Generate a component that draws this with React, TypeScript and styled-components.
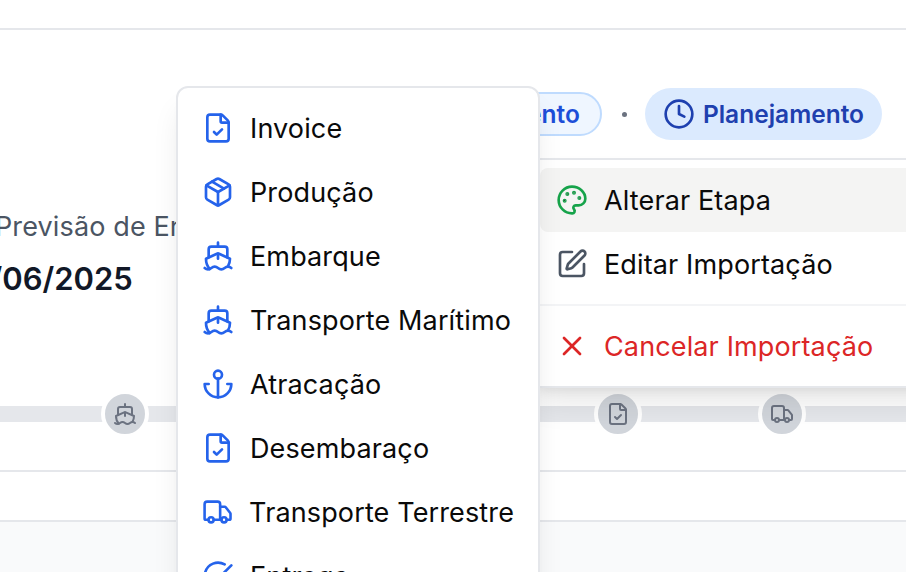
import styled, { createGlobalStyle } from 'styled-components';
import {
	CircleCheckBig,
	Clock,
	FileCheck,
	Package,
	Palette,
	Ship,
	SquarePen,
	Truck,
	X,
} from 'lucide-react';

// older lucide anchor: arc with short ends and no crossbar
const Anchor = ({ size = 24, color = 'currentColor' }: { size?: number; color?: string }) => (
	<svg
		width={size}
		height={size}
		viewBox="0 0 24 24"
		fill="none"
		stroke={color}
		strokeWidth="2"
		strokeLinecap="round"
		strokeLinejoin="round"
	>
		<circle cx="12" cy="5" r="3" />
		<line x1="12" y1="22" x2="12" y2="8" />
		<path d="M5 12H2a10 10 0 0 0 20 0h-3" />
	</svg>
);

const stages = [
	{ label: 'Invoice', Icon: FileCheck },
	{ label: 'Produção', Icon: Package },
	{ label: 'Embarque', Icon: Ship },
	{ label: 'Transporte Marítimo', Icon: Ship },
	{ label: 'Atracação', Icon: Anchor },
	{ label: 'Desembaraço', Icon: FileCheck },
	{ label: 'Transporte Terrestre', Icon: Truck },
	{ label: 'Entrega', Icon: CircleCheckBig },
];

const railSteps = [Ship, Ship, Anchor, FileCheck, Truck];

const App = () => {
	return (
		<Page>
			<GlobalStyle />
			<TopBar />
			<Header>
				<StatusPill>Em Andamento</StatusPill>
				<Dot />
				<StagePill>
					<Clock size={32} />
					Planejamento
				</StagePill>
			</Header>
			<Info>
				<InfoLabel>Previsão de Entrega</InfoLabel>
				<InfoDate>24/06/2025</InfoDate>
			</Info>
			<Rail>
				{railSteps.map((Icon, i) => (
					<RailNode key={i}>
						<Icon size={24} />
					</RailNode>
				))}
			</Rail>
			<Strip />
			<Footer />

			<StageMenu>
				{stages.map(({ label, Icon }) => (
					<MenuItem key={label}>
						<Icon size={32} color="#2563eb" />
						{label}
					</MenuItem>
				))}
			</StageMenu>

			<ActionsMenu>
				<MenuItem $active>
					<Palette size={32} color="#16a34a" />
					Alterar Etapa
				</MenuItem>
				<MenuItem>
					<SquarePen size={32} color="#4b5563" />
					Editar Importação
				</MenuItem>
				<Divider />
				<MenuItem $danger>
					<X size={32} color="#dc2626" />
					Cancelar Importação
				</MenuItem>
			</ActionsMenu>
		</Page>
	);
};

const GlobalStyle = createGlobalStyle`
	html, body {
		margin: 0;
		background: #fff;
		font-family: Inter, 'Liberation Sans', sans-serif;
	}
`;

const Page = styled.div`
	position: relative;
	width: 906px;
	height: 572px;
	overflow: hidden;
	background: #fff;
`;

const TopBar = styled.div`
	height: 28px;
	border-bottom: 2px solid #e5e7eb;
`;

const Header = styled.div`
	display: flex;
	justify-content: flex-end;
	align-items: center;
	gap: 18px;
	padding: 58px 24px 0 0;
`;

const StatusPill = styled.div`
	display: flex;
	align-items: center;
	height: 44px;
	box-sizing: border-box;
	margin-right: 2px;
	padding: 0 20px;
	border: 2px solid #bfdbfe;
	border-radius: 22px;
	background: #eff6ff;
	color: #1d4ed8;
	font-size: 24.5px;
	font-weight: 600;
`;

const Dot = styled.span`
	width: 5px;
	height: 5px;
	border-radius: 50%;
	background: #6b7280;
`;

const StagePill = styled.div`
	display: flex;
	align-items: center;
	gap: 8px;
	height: 52px;
	padding: 0 18px;
	border-radius: 26px;
	background: #dbeafe;
	color: #1e40af;
	font-size: 24.5px;
	font-weight: 600;
`;

const Info = styled.div`
	display: flex;
	flex-direction: column;
	margin-top: 67px;
`;

const InfoLabel = styled.div`
	margin-left: -5px;
	color: #4b5563;
	font-size: 27px;
	letter-spacing: 0.13px;
	line-height: 40px;
	white-space: nowrap;
`;

const InfoDate = styled.div`
	margin: 12px 0 0 -49px;
	color: #111827;
	font-size: 31px;
	font-weight: 600;
	line-height: 40px;
	white-space: nowrap;
`;

const Rail = styled.div`
	position: relative;
	display: flex;
	align-items: center;
	gap: 116.3px;
	height: 48px;
	margin-top: 91px;
	padding-left: 101px;

	&::before {
		content: '';
		position: absolute;
		left: 0;
		right: 0;
		top: 16px;
		height: 16px;
		background: #e5e7eb;
	}
`;

const RailNode = styled.div`
	position: relative;
	display: flex;
	flex: none;
	align-items: center;
	justify-content: center;
	width: 40px;
	height: 40px;
	border: 4px solid #fff;
	border-radius: 50%;
	background: #d1d5db;
	color: #6b7280;
`;

const Strip = styled.div`
	height: 48px;
	margin-top: 32px;
	border-top: 2px solid #e5e7eb;
`;

const Footer = styled.div`
	height: 60px;
	border-top: 2px solid #e5e7eb;
	background: #f9fafb;
`;

const Menu = styled.div`
	position: absolute;
	box-sizing: border-box;
	padding: 8px;
	border: 2px solid #e5e7eb;
	background: #fff;
	box-shadow: 0 20px 30px -6px rgba(0, 0, 0, 0.1), 0 8px 12px -8px rgba(0, 0, 0, 0.1);
`;

const StageMenu = styled(Menu)`
	z-index: 2;
	left: 176px;
	top: 86px;
	width: 364px;
	border-radius: 12px;
`;

const ActionsMenu = styled(Menu)`
	z-index: 1;
	left: 530px;
	top: 158px;
	width: 420px;
`;

const MenuItem = styled.div<{ $active?: boolean; $danger?: boolean }>`
	display: flex;
	align-items: center;
	gap: 16px;
	height: 64px;
	padding: 0 16px;
	border-radius: 8px;
	background: ${(p) => (p.$active ? '#f4f4f3' : 'transparent')};
	color: ${(p) => (p.$danger ? '#dc2626' : '#0a0a0a')};
	font-size: 27px;
	letter-spacing: 0.13px;
	white-space: nowrap;
`;

const Divider = styled.div`
	height: 2px;
	margin: 8px -8px;
	background: #f3f4f6;
`;

export default App;
